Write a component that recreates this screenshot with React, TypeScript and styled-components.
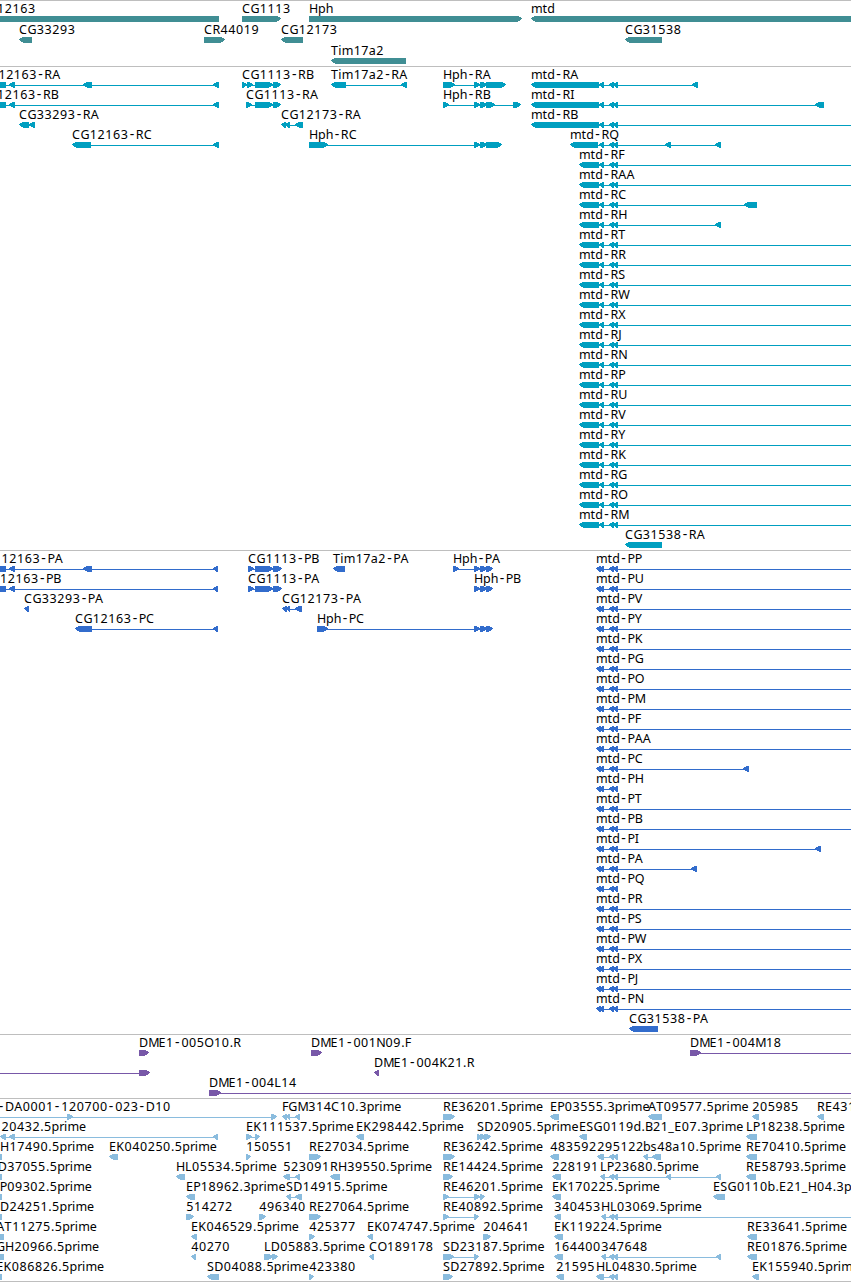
import React from 'react';
import styled, { createGlobalStyle } from 'styled-components';

const GlobalStyle = createGlobalStyle`
  html, body { margin: 0; padding: 0; background: #fff; }
  body { overflow: hidden; }
`;

const Browser = styled.main`
  display: flex;
  flex-direction: column;
  width: 100%;
  max-width: 851px;
  overflow: hidden;
  background: #fff;
`;

const Track = styled.section<{ $color: string; $gap?: number; $last?: boolean }>`
  display: flex;
  flex-direction: column;
  gap: ${(p) => p.$gap ?? 0}px;
  padding: 1px 0 ${(p) => (p.$last ? 1 : 2)}px;
  border-top: 1px solid #bebebe;
  border-bottom: ${(p) => (p.$last ? '1px solid #bebebe' : 'none')};
  color: ${(p) => p.$color};
`;

const Lane = styled.svg`
  display: block;
  flex: none;
  width: 100%;
  height: 20px;
  overflow: visible;
`;

const Label = styled.text`
  font-family: 'Noto Sans', 'DejaVu Sans', sans-serif;
  font-size: 12.5px;
  fill: #000;
  white-space: pre;
`;

const Dash = styled.tspan`
  font-size: 14px;
`;

const Glyph = styled.path`
  fill: currentColor;
  shape-rendering: crispEdges;
`;

type Span = [number, number];

interface Feature {
  label: string;
  dir: 'L' | 'R';
  exons: Span[];
  labelEnd?: number;
  from?: number;
  to?: number;
}

const OFF = 860;
const FONT_SIZE = 12;

// Character advances in em units, used to space the labels evenly.
const ADVANCE: Record<string, number> = {
  A: 0.684, B: 0.64, C: 0.698, D: 0.77, E: 0.6, F: 0.53, G: 0.765, H: 0.752,
  I: 0.295, J: 0.32, K: 0.66, L: 0.557, M: 0.86, N: 0.748, O: 0.787, P: 0.603,
  Q: 0.787, R: 0.66, S: 0.6, T: 0.611, U: 0.732, V: 0.684, W: 0.95, X: 0.685,
  Y: 0.63, a: 0.6, b: 0.635, d: 0.635, e: 0.6, h: 0.634, i: 0.29, m: 0.96,
  p: 0.635, r: 0.411, s: 0.521, t: 0.392, '-': 0.632, '.': 0.33, _: 0.5,
};

// Glyphs narrower than their cell are centred in it by this many pixels.
const INSET: Record<string, number> = { '-': 1.4, '.': 0.4 };

const advance = (c: string) => (ADVANCE[c] ?? 0.645) * FONT_SIZE;
const inset = (c: string) => INSET[c] ?? (/\d/.test(c) ? 0.3 : 0);

function charPositions(text: string, start: number, end?: number) {
  const total = [...text].reduce((sum, c) => sum + advance(c), 0);
  let x = end === undefined ? start : end - total;
  return [...text]
    .map((c) => {
      const at = x + inset(c);
      x += advance(c);
      return at.toFixed(2);
    })
    .join(' ');
}

function exonPath([a, b]: Span, dir: 'L' | 'R') {
  const tip = Math.min(4.5, b - a - 1);
  return dir === 'L'
    ? `M${b} 14H${a + tip - 0.5}L${a} 16.2V16.8L${a + tip} 20H${b}Z`
    : `M${a} 14H${b - tip + 0.5}L${b} 16.2V16.8L${b - tip} 20H${a}Z`;
}

function FeatureGlyph({ f }: { f: Feature }) {
  const a = f.from ?? f.exons[0][0] + 2;
  const b = f.to ?? f.exons[f.exons.length - 1][1] - 2;
  const linked = f.exons.length > 1 || f.from !== undefined || f.to !== undefined;
  return (
    <g>
      {f.label && (
        <Label x={charPositions(f.label, f.exons[0][0], f.labelEnd)} y={11}>
          {f.label.split(/(-)/).map((part, i) => (part === '-' ? <Dash key={i}>-</Dash> : part))}
        </Label>
      )}
      {linked && <Glyph d={`M${a} 17H${b}V18H${a}Z`} />}
      {f.exons.map((e, i) => (
        <Glyph key={i} d={exonPath(e, f.dir)} />
      ))}
    </g>
  );
}

const L = (label: string, exons: Span[], extra: Partial<Feature> = {}): Feature => ({ label, dir: 'L', exons, ...extra });
const R = (label: string, exons: Span[], extra: Partial<Feature> = {}): Feature => ({ label, dir: 'R', exons, ...extra });

const genes: Feature[][] = [
  [L('12163', [[-20, 219]], { labelEnd: 35.5 }), R('CG1113', [[242, 281]]), R('Hph', [[309, 522]]), L('mtd', [[531, OFF]])],
  [L('CG33293', [[19, 32]]), R('CR44019', [[204, 225]]), L('CG12173', [[281, 303]]), L('CG31538', [[625, 662]])],
  [L('Tim17a2', [[331, 406]])],
];

const pair: Span[] = [[609, 614], [613, 618]];
const near: Span[] = [[599, 604], ...pair];
const hphMid: Span[] = [[474, 480], [480, 487]];

const mtdR = (s: string): Feature => {
  const tail: Record<string, Span> = { RC: [744, 757], RH: [715, 721] };
  const exons: Span[] = [[579, 599], ...near];
  return tail[s] ? L(`mtd-${s}`, [...exons, tail[s]]) : L(`mtd-${s}`, exons, { to: OFF });
};

const transcripts: Feature[][] = [
  [
    L('12163-RA', [[-20, 6], [9, 15], [83, 92], [213, 219]], { labelEnd: 60.5 }),
    R('CG1113-RB', [[242, 247], [247, 253], [255, 273], [273, 281]]),
    L('Tim17a2-RA', [[331, 346], [401, 407]]),
    R('Hph-RA', [[443, 455], ...hphMid, [486, 506]]),
    L('mtd-RA', [[531, 599], ...near, [692, 698]]),
  ],
  [
    L('12163-RB', [[-20, 6], [9, 15], [213, 219]], { labelEnd: 58.5 }),
    R('CG1113-RA', [[246, 252], [255, 273], [273, 281]]),
    R('Hph-RB', [[443, 449], ...hphMid, [486, 495], [513, 521]]),
    L('mtd-RI', [[531, 599], ...near, [815, 824]]),
  ],
  [
    L('CG33293-RA', [[19, 29], [29, 35]]),
    L('CG12173-RA', [[281, 286], [285, 290], [295, 303]]),
    L('mtd-RB', [[531, 599], ...near], { to: OFF }),
  ],
  [
    L('CG12163-RC', [[72, 91], [213, 219]]),
    R('Hph-RC', [[309, 328], ...hphMid, [486, 502]]),
    L('mtd-RQ', [[570, 598], ...near, [665, 671], [715, 721]]),
  ],
  ...'RF RAA RC RH RT RR RS RW RX RJ RN RP RU RV RY RK RG RO RM'.split(' ').map((s) => [mtdR(s)]),
  [L('CG31538-RA', [[625, 662]])],
];

const mtdP = (s: string): Feature => {
  const tail: Record<string, Span> = { PC: [743, 749], PI: [815, 821], PA: [691, 697] };
  const exons: Span[] = [[596, 601], ...near];
  if (tail[s]) return L(`mtd-${s}`, [...exons, tail[s]]);
  return L(`mtd-${s}`, exons, s === 'PH' || s === 'PQ' ? {} : { to: OFF });
};

const proteinsLeft: Feature[][] = [
  [
    L('12163-PA', [[-20, 6], [9, 15], [83, 92], [213, 218]], { labelEnd: 63 }),
    R('CG1113-PB', [[248, 254], [255, 273], [273, 282]]),
    L('Tim17a2-PA', [[333, 345]]),
    R('Hph-PA', [[453, 459], ...hphMid, [486, 493]]),
  ],
  [
    L('12163-PB', [[-20, 6], [9, 15], [213, 218]], { labelEnd: 61 }),
    R('CG1113-PA', [[248, 254], [255, 273], [273, 282]]),
    R('Hph-PB', [...hphMid, [486, 493]]),
  ],
  [L('CG33293-PA', [[24, 29]]), L('CG12173-PA', [[282, 287], [286, 290], [295, 302]])],
  [L('CG12163-PC', [[75, 92], [213, 218]]), R('Hph-PC', [[317, 328], ...hphMid, [486, 493]])],
];

const proteins: Feature[][] = [
  ...'PP PU PV PY PK PG PO PM PF PAA PC PH PT PB PI PA PQ PR PS PW PX PJ PN'
    .split(' ')
    .map((s, i) => [...(proteinsLeft[i] ?? []), mtdP(s)]),
  [L('CG31538-PA', [[629, 658]])],
];

const clones: Feature[][] = [
  [R('DME1-005O10.R', [[139, 149]]), R('DME1-001N09.F', [[311, 322]]), R('DME1-004M18', [[690, 701]], { to: OFF })],
  [R('', [[139, 150]], { from: -5 }), L('DME1-004K21.R', [[374, 379]])],
  [R('DME1-004L14', [[209, 221]], { to: OFF })],
];

const ests: Feature[][] = [
  [
    R('-DA0001-120700-023-D10', [[67, 73], [271, 277]], { labelEnd: 170.5, from: -5 }),
    L('FGM314C10.3prime', [[282, 287], [286, 290], [295, 300]]),
    R('RE36201.5prime', [[443, 455]]),
    L('EP03555.3prime', [[550, 559]]),
    L('AT09577.5prime', [[648, 662]]),
    L('205985', [[752, 759]]),
    L('RE431', [[817, 824]]),
  ],
  [
    L('20432.5prime', [[0, 6], [9, 15], [213, 218]], { labelEnd: 86.3 }),
    R('EK111537.5prime', [[246, 252], [255, 260]]),
    L('EK298442.5prime', [[356, 364]]),
    R('SD20905.5prime', [[477, 482], [480, 486], [484, 491]]),
    L('ESG0119d.B21_E07.3prime', [[579, 587]]),
    L('LP18238.5prime', [[746, 757]]),
  ],
  [
    L('H17490.5prime', [[-10, 2]], { labelEnd: 94.3 }),
    L('EK040250.5prime', [[109, 118]]),
    R('150551', [[246, 251]]),
    R('RE27034.5prime', [[309, 321]]),
    R('RE36242.5prime', [[443, 455]]),
    L('483592', [[550, 559]]),
    L('295122', [[597, 604], ...pair]),
    L('bs48a10.5prime', [[643, 648], [652, 661]]),
    L('RE70410.5prime', [[746, 757]]),
  ],
  [
    L('D37055.5prime', [[-10, 2]], { labelEnd: 92 }),
    L('HL05534.5prime', [[176, 185]]),
    L('523091', [[283, 290], [295, 300]]),
    L('RH39550.5prime', [[330, 340]]),
    R('RE14424.5prime', [[443, 453]]),
    L('228191', [[552, 561]]),
    L('LP23680.5prime', [[600, 605], ...pair, [666, 671], [716, 721]]),
    L('RE58793.5prime', [[746, 756]]),
  ],
  [
    L('P09302.5prime', [[-10, 2]], { labelEnd: 92 }),
    L('EP18962.3prime', [[186, 195]]),
    L('SD14915.5prime', [[286, 291], [295, 302]]),
    R('RE46201.5prime', [[443, 449], [474, 480], [480, 485]]),
    L('EK170225.5prime', [[552, 561]]),
    L('ESG0110b.E21_H04.3p', [[713, 725]]),
  ],
  [
    L('D24251.5prime', [[-10, 2]], { labelEnd: 94.3 }),
    R('514272', [[186, 194]]),
    R('496340', [[259, 266]]),
    R('RE27064.5prime', [[309, 321]]),
    R('RE40892.5prime', [[443, 449], [474, 479]]),
    L('340453', [[554, 561]]),
    L('HL03069.5prime', [[601, 606], ...pair], { to: OFF }),
  ],
  [
    L('AT11275.5prime', [[-10, 4]], { labelEnd: 97 }),
    L('EK046529.5prime', [[191, 197]]),
    R('425377', [[309, 315]]),
    L('EK074747.5prime', [[367, 373]]),
    R('204641', [[483, 491]]),
    L('EK119224.5prime', [[554, 563]]),
    L('RE33641.5prime', [[747, 757]]),
  ],
  [
    L('GH20966.5prime', [[-10, 4]], { labelEnd: 99.3 }),
    L('40270', [[191, 196]]),
    R('LD05883.5prime', [[264, 273], [272, 278]]),
    L('CO189178', [[369, 374]]),
    R('SD23187.5prime', [[443, 454], [474, 479]]),
    L('164400', [[554, 563]]),
    L('347648', [[601, 606], ...pair, [716, 721]]),
    L('RE01876.5prime', [[747, 757]]),
  ],
  [
    L('EK086826.5prime', [[-10, 2]], { labelEnd: 104.3 }),
    L('SD04088.5prime', [[207, 219]]),
    R('423380', [[309, 314]]),
    R('SD27892.5prime', [[443, 453]]),
    L('21595', [[556, 564]]),
    L('HL04830.5prime', [[596, 604], ...pair]),
    L('EK155940.5prime', [[752, 759]]),
  ],
];

const tracks = [
  { id: 'genes', color: '#408e94', rows: genes, gap: 1 },
  { id: 'transcripts', color: '#009fc0', rows: transcripts },
  { id: 'proteins', color: '#326ccc', rows: proteins },
  { id: 'clones', color: '#7858a8', rows: clones },
  { id: 'ests', color: '#8abcde', rows: ests },
];

export default function App() {
  return (
    <>
      <GlobalStyle />
      <Browser>
        {tracks.map((t, i) => (
          <Track key={t.id} $color={t.color} $gap={t.gap} $last={i === tracks.length - 1}>
            {t.rows.map((row, r) => (
              <Lane key={r}>
                {row.map((f, k) => (
                  <FeatureGlyph key={k} f={f} />
                ))}
              </Lane>
            ))}
          </Track>
        ))}
      </Browser>
    </>
  );
}
